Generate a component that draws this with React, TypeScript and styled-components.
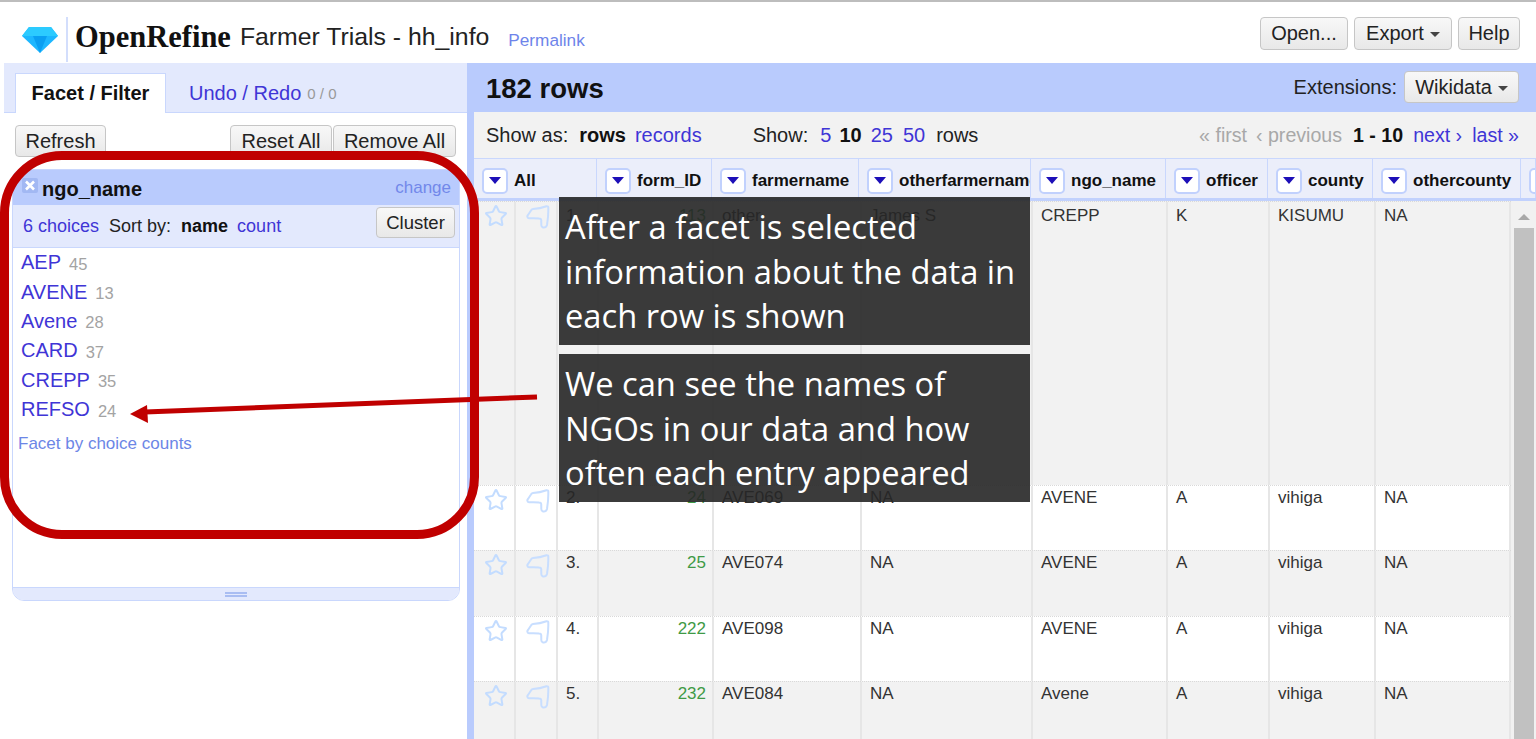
import React, { FC } from 'react';
import styled, { createGlobalStyle } from 'styled-components';
import { Star } from 'lucide-react';

const GlobalStyle = createGlobalStyle`
    html, body {
        margin: 0;
        padding: 0;
        background: #fff;
        overflow: hidden;
    }
    * {
        box-sizing: border-box;
    }
`;

const Page = styled.div`
    position: relative;
    width: 1536px;
    height: 739px;
    overflow: hidden;
    border-top: 2px solid #bdbdbd;
    font-family: "Liberation Sans", Arial, sans-serif;
    color: #1c1c1c;
    background: #fff;
`;

const Header = styled.header`
    height: 61px;
    display: flex;
    align-items: center;
    padding: 8px 16px 0 22px;
`;

const LogoMark = styled.div`
    display: flex;
    margin-top: 6px;
`;

const LogoDivider = styled.div`
    width: 2px;
    height: 45px;
    margin: 6px 7px 0 8px;
    background: #d3defc;
`;

const LogoText = styled.span`
    font-family: "Liberation Serif", serif;
    font-weight: 700;
    font-size: 30.5px;
    margin: 2px 9px 0 0;
    color: #111;
`;

const ProjectName = styled.span`
    font-size: 24.8px;
    margin-right: 19px;
    color: #222;
`;

const Permalink = styled.a`
    font-size: 17.2px;
    color: #6e84ea;
    margin-top: 8px;
`;

const HeaderActions = styled.div`
    margin-left: auto;
    display: flex;
    gap: 6px;
    margin-top: -6px;
`;

const Button = styled.button<{ $w: number; $h?: number; $fs?: number }>`
    width: ${p => p.$w}px;
    height: ${p => p.$h ?? 33}px;
    padding: 0;
    flex: none;
    font-family: inherit;
    font-size: ${p => p.$fs ?? 20}px;
    color: #222;
    background: linear-gradient(#f8f8f8, #e8e8e8);
    border: 1px solid #c6c6c6;
    border-radius: 4px;
    display: inline-flex;
    align-items: center;
    justify-content: center;
    gap: 6px;
`;

const Caret = styled.span`
    width: 0;
    height: 0;
    border-left: 5px solid transparent;
    border-right: 5px solid transparent;
    border-top: 5px solid #444;
    margin-top: 2px;
`;

const Body = styled.div`
    display: flex;
    height: 676px;
    padding-left: 4px;
`;

const LeftPanel = styled.aside`
    width: 463px;
    flex: none;
`;

const TabBar = styled.div`
    height: 50px;
    padding: 10px 0 0 11px;
    display: flex;
    background: #e3e9fd;
    border-bottom: 1px solid #c9d7fd;
`;

const ActiveTab = styled.div`
    width: 151px;
    height: 40px;
    background: #fff;
    border: 1px solid #c9d7fd;
    border-bottom: 0;
    font-weight: 700;
    font-size: 20px;
    display: flex;
    align-items: center;
    justify-content: center;
    color: #111;
`;

const UndoTab = styled.div`
    margin-left: 23px;
    padding-top: 2px;
    font-size: 20px;
    display: flex;
    align-items: center;
    color: #3f35d6;
`;

const UndoCount = styled.span`
    font-size: 15px;
    color: #999;
    margin-left: 6px;
    font-weight: 400;
`;

const FacetToolbar = styled.div`
    display: flex;
    justify-content: space-between;
    padding: 12px 11px 0 11px;
`;

const ButtonGroup = styled.div`
    display: flex;
    gap: 1px;
`;

const Facet = styled.section`
    width: 448px;
    margin: 12px 0 0 8px;
    height: 432px;
    border: 1px solid #c9d7fd;
    border-radius: 10px 10px 12px 12px;
    display: flex;
    flex-direction: column;
    overflow: hidden;
`;

const FacetTitle = styled.div`
    height: 35px;
    flex: none;
    background: #b9cbfd;
    display: flex;
    align-items: center;
    padding: 3px 8px 0 9px;
`;

const FacetName = styled.span`
    font-weight: 700;
    font-size: 20px;
    margin-left: 4px;
    color: #111;
`;

const ChangeLink = styled.a`
    margin-left: auto;
    font-size: 17px;
    color: #7288ea;
    margin-top: -3px;
`;

const FacetControls = styled.div`
    height: 43px;
    flex: none;
    background: #e3e9fd;
    border-bottom: 1px solid #c9d7fd;
    display: flex;
    align-items: center;
    padding: 0 4px 0 10px;
    font-size: 18px;
`;

const Link = styled.a<{ $gap?: number }>`
    color: #3f35d6;
    margin-left: ${p => p.$gap ?? 0}px;
`;

const Plain = styled.span<{ $gap?: number }>`
    margin-left: ${p => p.$gap ?? 0}px;
    color: #222;
`;

const Strong = styled.b<{ $gap?: number }>`
    margin-left: ${p => p.$gap ?? 0}px;
    color: #111;
`;

const ClusterSlot = styled.div`
    margin-left: auto;
    margin-top: -7px;
`;

const ChoiceList = styled.ul`
    flex: 1;
    list-style: none;
    margin: 0;
    padding: 0 0 0 8px;
    background: #fff;
`;

const Choice = styled.li`
    height: 29.6px;
    display: flex;
    align-items: center;
    font-size: 20px;
    color: #3f35d6;
    margin-top: -0.2px;
`;

const ChoiceCount = styled.span`
    font-size: 16.5px;
    color: #a3a3a3;
    margin-left: 8px;
    margin-top: 3px;
`;

const ChoiceCounts = styled.a`
    display: block;
    font-size: 17px;
    color: #6c86e6;
    margin: 10px 0 0 -3px;
`;

const FacetFooter = styled.div`
    height: 13px;
    flex: none;
    background: #e3e9fd;
    border-top: 1px solid #c9d7fd;
    display: flex;
    align-items: center;
    justify-content: center;
`;

const Grip = styled.div`
    width: 22px;
    height: 5px;
    border-top: 2px solid #a9bdf2;
    border-bottom: 2px solid #a9bdf2;
`;

const RightPanel = styled.main`
    flex: 1;
    min-width: 0;
    border-left: 7px solid #b9cbfd;
    display: flex;
    flex-direction: column;
    overflow: hidden;
`;

const SummaryBar = styled.div`
    height: 49px;
    flex: none;
    margin-left: -1px;
    background: #b9cbfd;
    display: flex;
    align-items: center;
    padding: 0 17px 0 13px;
`;

const RowCount = styled.h1`
    margin: 3px 0 0;
    font-size: 27.5px;
    font-weight: 700;
    color: #111;
`;

const Extensions = styled.div`
    margin-left: auto;
    display: flex;
    align-items: center;
    gap: 7px;
    font-size: 20px;
    color: #222;
    margin-top: -1px;
`;

const ViewBar = styled.div`
    height: 46px;
    flex: none;
    background: #f2f2f2;
    display: flex;
    align-items: center;
    padding: 0 17px 0 12px;
    font-size: 20px;
`;

const Pager = styled.div`
    margin-left: auto;
    display: flex;
    font-size: 19.6px;
`;

const Muted = styled.span<{ $gap?: number }>`
    color: #a8a8a8;
    margin-left: ${p => p.$gap ?? 0}px;
`;

const ColumnHeader = styled.div`
    height: 43px;
    flex: none;
    display: grid;
    grid-template-columns: 123px 115px 147px 172px 135px 102px 105px 148px 1fr;
    background: #ebeefa;
    border-top: 1px solid #c9d7fd;
    border-bottom: 3px solid #c1d1fd;
`;

const HeaderCell = styled.div`
    display: flex;
    align-items: center;
    gap: 6px;
    padding: 4px 0 0 8px;
    border-right: 1px solid #c9d7fd;
    font-weight: 700;
    font-size: 17px;
    color: #111;
    white-space: nowrap;
    overflow: hidden;
`;

const ColumnMenu = styled.span`
    flex: none;
    width: 26px;
    height: 26px;
    background: #fff;
    border: 2px solid #c1d1fd;
    border-radius: 5px;
    display: flex;
    align-items: center;
    justify-content: center;
    &::after {
        content: '';
        width: 0;
        height: 0;
        border-left: 6px solid transparent;
        border-right: 6px solid transparent;
        border-top: 7px solid #1d0fb8;
    }
`;

const TableArea = styled.div`
    flex: 1;
    display: flex;
    min-height: 0;
`;

const Rows = styled.div`
    width: 1037px;
    flex: none;
`;

const Row = styled.div<{ $h: number; $odd: boolean; $textTop: number }>`
    height: ${p => p.$h}px;
    display: grid;
    grid-template-columns: 42px 42px 41px 115px 148px 171px 135px 102px 106px 1fr;
    background: ${p => (p.$odd ? '#f2f2f2' : '#fff')};
    border-top: 1px dotted #d9d9d9;
    --text-top: ${p => p.$textTop}px;
`;

const Cell = styled.div<{ $right?: boolean; $green?: boolean }>`
    border-right: 2px solid #e6e6e6;
    padding: var(--text-top) 6px 0 8px;
    font-size: 17px;
    color: ${p => (p.$green ? '#3f9a46' : '#333')};
    text-align: ${p => (p.$right ? 'right' : 'left')};
    white-space: nowrap;
    overflow: hidden;
`;

const IconCell = styled.div`
    border-right: 2px solid #e6e6e6;
    padding: 2px 0 0 10px;
    color: #c3dcff;
`;

const FlagCell = styled(IconCell)`
    padding-top: 3px;
`;

const Scrollbar = styled.div`
    flex: 1;
    background: #f1f1f1;
    display: flex;
    flex-direction: column;
    align-items: center;
    padding-top: 13px;
`;

const ScrollArrow = styled.span`
    width: 0;
    height: 0;
    border-left: 6px solid transparent;
    border-right: 6px solid transparent;
    border-bottom: 6px solid #a8a8a8;
`;

const ScrollThumb = styled.div`
    width: 20px;
    flex: 1;
    margin-top: 8px;
    background: #c1c1c1;
`;

const Annotation = styled.div<{ $top: number }>`
    position: absolute;
    left: 559px;
    top: ${p => p.$top}px;
    width: 471px;
    height: 148px;
    padding: 8px 6px 0;
    background: rgba(38, 38, 38, 0.9);
    color: #fff;
    font-family: "Open Sans", sans-serif;
    font-size: 32.7px;
    line-height: 44.5px;
    white-space: nowrap;
`;

const Callout = styled.div`
    position: absolute;
    left: 0;
    top: 149px;
    width: 479px;
    height: 388px;
    border: 9px solid #c00000;
    border-radius: 62px;
    pointer-events: none;
`;

const ArrowOverlay = styled.svg`
    position: absolute;
    left: 125px;
    top: 385px;
`;

const Diamond: FC = () => (
    <svg width="36" height="26" viewBox="0 0 36 26">
        <polygon points="7,0 29,0 36,9 18,26 0,9" fill="#1db7ff" />
        <polygon points="7,0 29,0 36,9 0,9" fill="#2ccbff" />
        <polygon points="11,9 25,9 18,26" fill="#0a9ff2" />
    </svg>
);

const CloseBox: FC = () => (
    <svg width="16" height="15" viewBox="0 0 16 15" style={{ marginTop: -7 }}>
        <rect width="16" height="15" rx="2" fill="#a2b8f3" />
        <path d="M4 3.5 L12 11.5 M12 3.5 L4 11.5" stroke="#fff" strokeWidth="2.6" />
    </svg>
);

const FlagIcon: FC = () => (
    <svg width="24" height="24" viewBox="0 0 24 24" fill="none" stroke="#c8deff" strokeWidth="2" strokeLinejoin="round" strokeLinecap="round">
        <path d="M1.5 12 Q1 11 2 10 L5 5.5 Q5.5 4.3 7 4 Q14 3.5 20.5 1.2 Q22.5 1 22.3 3 Q22.5 11 21 20 Q20 23 17 22.5 Q15 22 15.3 19 L15.2 15 Q15 13.4 13 13.4 Q8 13 3 13.3 Q1.8 13.3 1.5 12 Z" />
    </svg>
);

interface IRow {
    n: number;
    id: number;
    farmer: string;
    other: string;
    ngo: string;
    officer: string;
    county: string;
    h: number;
    textTop: number;
}

const rows: IRow[] = [
    { n: 1, id: 113, farmer: 'other', other: 'James S', ngo: 'CREPP', officer: 'K', county: 'KISUMU', h: 284, textTop: 4 },
    { n: 2, id: 24, farmer: 'AVE069', other: 'NA', ngo: 'AVENE', officer: 'A', county: 'vihiga', h: 65, textTop: 2 },
    { n: 3, id: 25, farmer: 'AVE074', other: 'NA', ngo: 'AVENE', officer: 'A', county: 'vihiga', h: 66, textTop: 2 },
    { n: 4, id: 222, farmer: 'AVE098', other: 'NA', ngo: 'AVENE', officer: 'A', county: 'vihiga', h: 65, textTop: 2 },
    { n: 5, id: 232, farmer: 'AVE084', other: 'NA', ngo: 'Avene', officer: 'A', county: 'vihiga', h: 66, textTop: 2 },
];

const columns = ['All', 'form_ID', 'farmername', 'otherfarmername', 'ngo_name', 'officer', 'county', 'othercounty', ''];

const choices: [string, number][] = [
    ['AEP', 45],
    ['AVENE', 13],
    ['Avene', 28],
    ['CARD', 37],
    ['CREPP', 35],
    ['REFSO', 24],
];

const App: FC = () => (
    <Page>
        <GlobalStyle />
        <Header>
            <LogoMark><Diamond /></LogoMark>
            <LogoDivider />
            <LogoText>OpenRefine</LogoText>
            <ProjectName>Farmer Trials - hh_info</ProjectName>
            <Permalink>Permalink</Permalink>
            <HeaderActions>
                <Button $w={88}>Open...</Button>
                <Button $w={98}>Export <Caret /></Button>
                <Button $w={62}>Help</Button>
            </HeaderActions>
        </Header>
        <Body>
            <LeftPanel>
                <TabBar>
                    <ActiveTab>Facet / Filter</ActiveTab>
                    <UndoTab>Undo / Redo<UndoCount>0 / 0</UndoCount></UndoTab>
                </TabBar>
                <FacetToolbar>
                    <Button $w={91} $h={32}>Refresh</Button>
                    <ButtonGroup>
                        <Button $w={102} $h={32}>Reset All</Button>
                        <Button $w={123} $h={32}>Remove All</Button>
                    </ButtonGroup>
                </FacetToolbar>
                <Facet>
                    <FacetTitle>
                        <CloseBox />
                        <FacetName>ngo_name</FacetName>
                        <ChangeLink>change</ChangeLink>
                    </FacetTitle>
                    <FacetControls>
                        <Link>6 choices</Link>
                        <Plain $gap={10}>Sort by:</Plain>
                        <Strong $gap={10}>name</Strong>
                        <Link $gap={9}>count</Link>
                        <ClusterSlot><Button $w={79} $h={31} $fs={18.5}>Cluster</Button></ClusterSlot>
                    </FacetControls>
                    <ChoiceList>
                        {choices.map(([name, count]) => (
                            <Choice key={name}>{name}<ChoiceCount>{count}</ChoiceCount></Choice>
                        ))}
                        <ChoiceCounts>Facet by choice counts</ChoiceCounts>
                    </ChoiceList>
                    <FacetFooter><Grip /></FacetFooter>
                </Facet>
            </LeftPanel>
            <RightPanel>
                <SummaryBar>
                    <RowCount>182 rows</RowCount>
                    <Extensions>
                        Extensions:
                        <Button $w={115} $h={32}>Wikidata <Caret /></Button>
                    </Extensions>
                </SummaryBar>
                <ViewBar>
                    <Plain>Show as:</Plain>
                    <Strong $gap={11}>rows</Strong>
                    <Link $gap={9}>records</Link>
                    <Plain $gap={51}>Show:</Plain>
                    <Link $gap={12}>5</Link>
                    <Strong $gap={8}>10</Strong>
                    <Link $gap={9}>25</Link>
                    <Link $gap={10}>50</Link>
                    <Plain $gap={11}>rows</Plain>
                    <Pager>
                        <Muted>« first</Muted>
                        <Muted $gap={9}>‹ previous</Muted>
                        <Strong $gap={11}>1 - 10</Strong>
                        <Link $gap={10}>next ›</Link>
                        <Link $gap={10}>last »</Link>
                    </Pager>
                </ViewBar>
                <ColumnHeader>
                    {columns.map((name, i) => (
                        <HeaderCell key={i}>
                            <ColumnMenu />
                            {name}
                        </HeaderCell>
                    ))}
                </ColumnHeader>
                <TableArea>
                    <Rows>
                        {rows.map(r => (
                            <Row key={r.n} $h={r.h} $odd={r.n % 2 === 1} $textTop={r.textTop}>
                                <IconCell><Star size={24} strokeWidth={2} /></IconCell>
                                <FlagCell><FlagIcon /></FlagCell>
                                <Cell>{r.n}.</Cell>
                                <Cell $right $green>{r.id}</Cell>
                                <Cell>{r.farmer}</Cell>
                                <Cell>{r.other}</Cell>
                                <Cell>{r.ngo}</Cell>
                                <Cell>{r.officer}</Cell>
                                <Cell>{r.county}</Cell>
                                <Cell>NA</Cell>
                            </Row>
                        ))}
                    </Rows>
                    <Scrollbar>
                        <ScrollArrow />
                        <ScrollThumb />
                    </Scrollbar>
                </TableArea>
            </RightPanel>
        </Body>
        <Annotation $top={195}>
            After a facet is selected<br />
            information about the data in<br />
            each row is shown
        </Annotation>
        <Annotation $top={352}>
            We can see the names of<br />
            NGOs in our data and how<br />
            often each entry appeared
        </Annotation>
        <Callout />
        <ArrowOverlay width="420" height="40" viewBox="0 0 420 40">
            <path d="M412 10 L20 25" stroke="#c00000" strokeWidth="5" fill="none" />
            <polygon points="5,27 22,18 23,36" fill="#c00000" />
        </ArrowOverlay>
    </Page>
);

export default App;
